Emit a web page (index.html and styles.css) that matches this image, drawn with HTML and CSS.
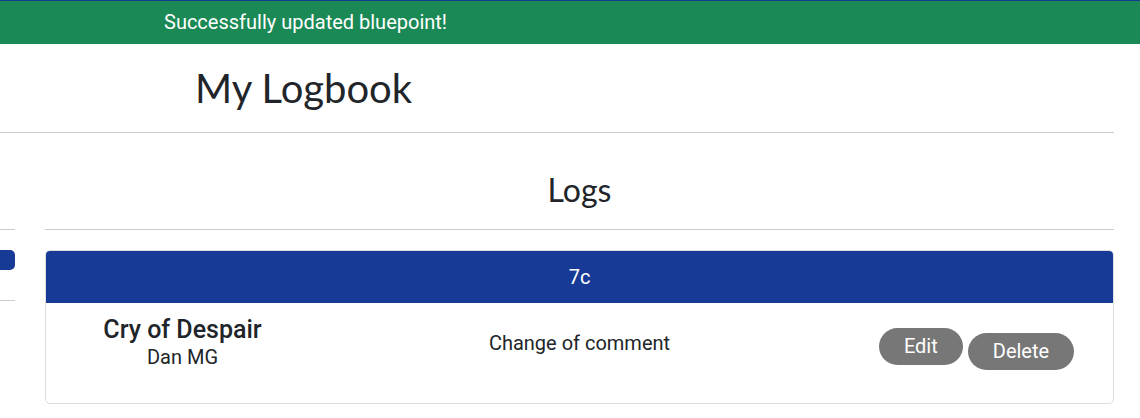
FILE: index.html
```html
<!DOCTYPE html>
<html lang="en">
<head>
<meta charset="utf-8">
<title>My Logbook</title>
<link rel="stylesheet" href="styles.css">
</head>
<body>
<div class="alert">Successfully updated bluepoint!</div>
<main class="page">
  <header class="page-head">
    <h1 class="page-title">My Logbook</h1>
  </header>
  <div class="layout">
    <aside class="sidebar">
      <div class="side-head"></div>
      <div class="side-chip"></div>
      <div class="side-rule"></div>
    </aside>
    <section class="logs">
      <div class="logs-head">
        <h2 class="logs-title">Logs</h2>
      </div>
      <article class="card">
        <div class="card-header">7c</div>
        <div class="card-body">
          <div class="route">
            <div class="route-name">Cry of Despair</div>
            <div class="route-setter">Dan MG</div>
          </div>
          <div class="comment">Change of comment</div>
          <div class="actions">
            <button class="btn btn-edit" type="button">Edit</button>
            <button class="btn btn-delete" type="button">Delete</button>
          </div>
        </div>
      </article>
    </section>
  </div>
</main>
</body>
</html>
```
FILE: styles.css
```css
* { box-sizing: border-box; }
html, body { margin: 0; padding: 0; background: #fff; }
body {
  font-family: Roboto, "Liberation Sans", sans-serif;
  color: #212529;
  overflow: hidden;
}
.alert {
  border-top: 1px solid #173a97;
  background: #1a8956;
  color: #fff;
  height: 44px;
  font-size: 20px;
  line-height: 42px;
  padding-left: 164px;
}
.page {
  margin-right: 26px;
}
.page-head {
  border-bottom: 1px solid #cccccc;
  height: 89px;
  padding-left: 195px;
}
.page-title {
  margin: 0;
  font-family: Lato, "Open Sans", sans-serif;
  font-weight: 400;
  font-size: 40px;
  line-height: 88px;
  color: #212529;
}
.layout {
  display: grid;
  grid-template-columns: 200px 1fr;
  column-gap: 30px;
  margin-left: -185px;
}
.side-head {
  height: 97px;
  border-bottom: 1px solid #cccccc;
}
.side-chip {
  margin-top: 20px;
  height: 20px;
  background: #173a97;
  border-radius: 5px;
}
.side-rule {
  margin-top: 30px;
  border-bottom: 1px solid #cccccc;
}
.logs-head {
  height: 97px;
  border-bottom: 1px solid #cccccc;
  text-align: center;
}
.logs-title {
  margin: 0;
  font-family: Lato, "Open Sans", sans-serif;
  font-weight: 400;
  font-size: 32px;
  line-height: 114px;
}
.card {
  margin-top: 20px;
  border: 1px solid #dddddd;
  border-radius: 5px;
  overflow: hidden;
}
.card-header {
  background: #173a97;
  color: #fff;
  height: 52px;
  line-height: 52px;
  text-align: center;
  font-size: 20px;
}
.card-body {
  display: grid;
  grid-template-columns: repeat(3, 1fr);
  column-gap: 124px;
  height: 100px;
  padding-top: 12px;
}
.route {
  text-align: center;
}
.route-name {
  font-size: 25px;
  font-weight: 500;
  line-height: 30px;
}
.route-setter {
  font-size: 20px;
  line-height: 24px;
}
.comment {
  text-align: center;
  font-size: 20px;
  line-height: 24px;
  padding-top: 16px;
}
.actions {
  display: flex;
  justify-content: center;
  align-items: flex-start;
  gap: 5px;
  padding-top: 13px;
}
.btn {
  font-family: Roboto, "Liberation Sans", sans-serif;
  font-size: 20px;
  line-height: 25px;
  color: #fff;
  background: #777777;
  border: none;
  border-radius: 19px;
  padding: 6px 25px;
}
.btn-delete {
  margin-top: 5px;
}
```
